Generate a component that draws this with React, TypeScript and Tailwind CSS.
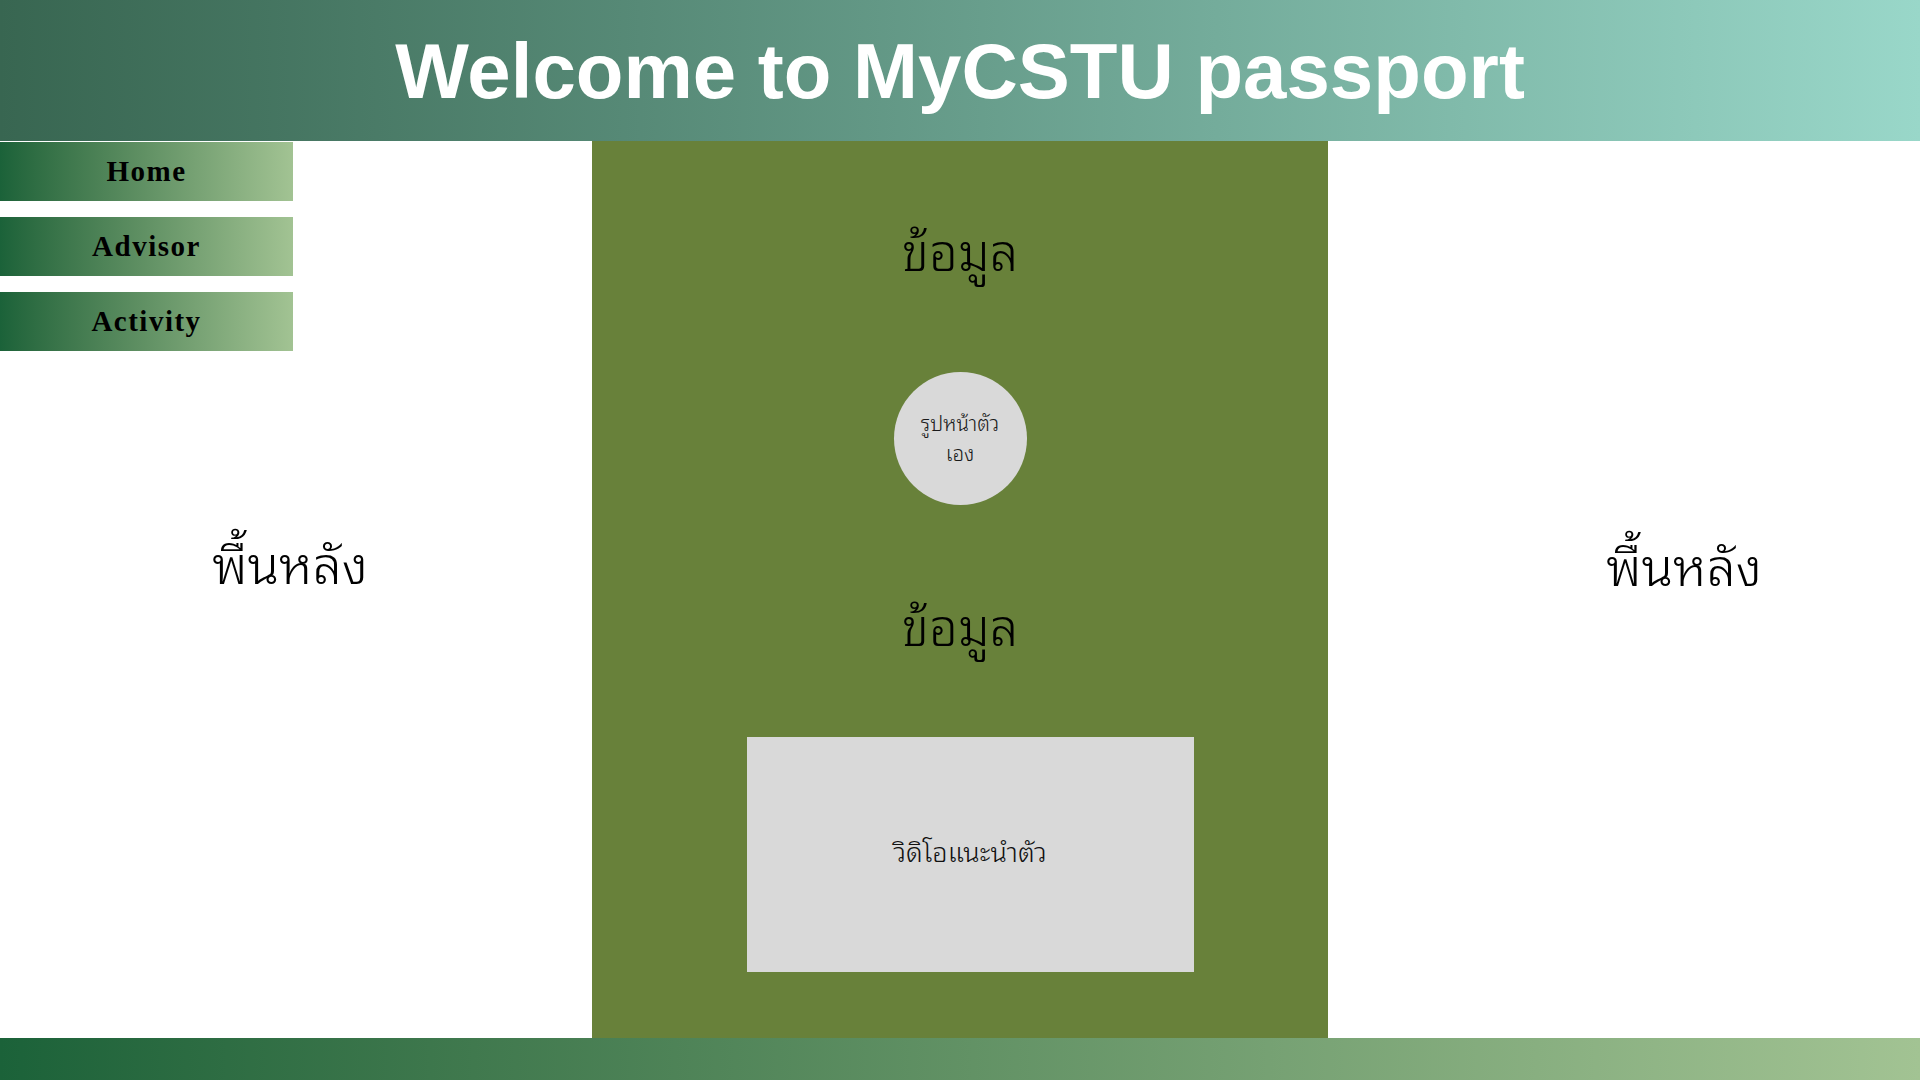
const navItems = ["Home", "Advisor", "Activity"];

const thai = {
  fontFamily: '"Noto Sans Thai Looped", "Noto Sans", sans-serif',
};

const NavButton = ({ label }: { label: string }) => (
  <div className="flex h-[59px] w-[293px] items-center justify-center bg-gradient-to-r from-[#1b6239] to-[#a2c393]">
    <span
      className="text-[29px] font-bold tracking-[1.5px] text-black"
      style={{ fontFamily: '"Liberation Serif", serif' }}
    >
      {label}
    </span>
  </div>
);

export default function App() {
  return (
    <div className="flex h-[1080px] w-[1920px] flex-col overflow-hidden bg-white">
      {/* header */}
      <header className="flex h-[141px] shrink-0 items-center justify-center bg-gradient-to-r from-[#386651] to-[#99d7c9]">
        <h1
          className="text-[78px] font-bold leading-none text-white"
          style={{ fontFamily: '"Liberation Sans", Arial, sans-serif' }}
        >
          Welcome to MyCSTU passport
        </h1>
      </header>

      <div className="flex h-[897px] shrink-0">
        {/* left side */}
        <div className="flex w-[592px] flex-col">
          <nav className="flex flex-col gap-[16px] pt-px">
            {navItems.map((item) => (
              <NavButton key={item} label={item} />
            ))}
          </nav>
          <div className="mt-[171px] pr-[12px] text-center text-[52px] font-[350] leading-[78px] text-black" style={thai}>
            พื้นหลัง
          </div>
        </div>

        {/* center panel */}
        <main className="flex w-[736px] flex-col items-center bg-[#68813a] pt-[71px] font-[350]" style={thai}>
          <h2 className="text-[51px] leading-[72px] text-black">ข้อมูล</h2>
          <div className="mt-[88px] flex h-[133px] w-[133px] items-center justify-center rounded-full bg-[#d9d9d9] pb-[4px] text-center text-[20.5px] leading-[30px] text-[#1a1a1a]">
            <p>
              รูปหน้าตัว
              <br />
              เอง
            </p>
          </div>
          <h2 className="mt-[82px] text-[51px] leading-[72px] text-black">ข้อมูล</h2>
          <div className="mt-[78px] ml-[20px] flex h-[235px] w-[447px] items-center justify-center bg-[#d9d9d9] pb-[8px] text-[27px] text-[#111]">
            วิดิโอแนะนำตัว
          </div>
        </main>

        {/* right side */}
        <div className="flex w-[592px] flex-col">
          <div className="mt-[383px] pl-[120px] text-center text-[52px] font-[350] leading-[78px] text-black" style={thai}>
            พื้นหลัง
          </div>
        </div>
      </div>

      {/* footer */}
      <footer className="h-[42px] shrink-0 bg-gradient-to-r from-[#1b6239] to-[#a2c393]" />
    </div>
  );
}
